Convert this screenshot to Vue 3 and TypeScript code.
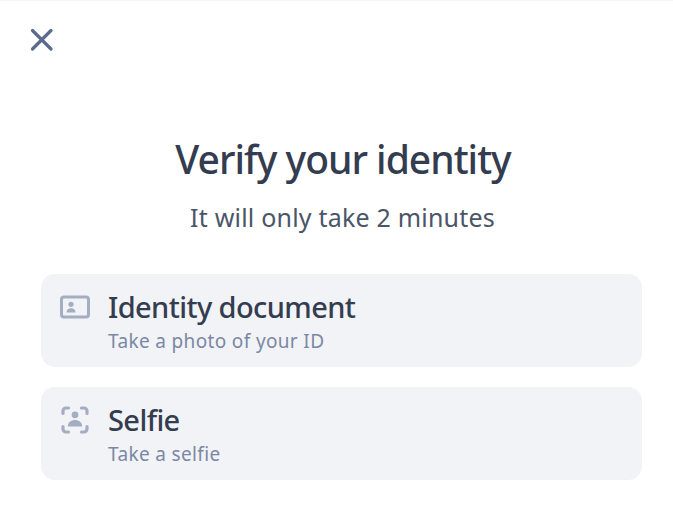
<script setup lang="ts">
interface Step { title: string; sub: string; kind: 'doc' | 'selfie' }
const steps: Step[] = [
  { title: 'Identity document', sub: 'Take a photo of your ID', kind: 'doc' },
  { title: 'Selfie', sub: 'Take a selfie', kind: 'selfie' },
]
</script>

<template>
  <div class="page">
    <button class="close" aria-label="Close">
      <svg width="26" height="26" viewBox="0 0 26 26" fill="none">
        <path d="M3.500 3.500L22 22M22 3.500L3.500 22" stroke="#5b6b8c" stroke-width="3.200" stroke-linecap="round" />
      </svg>
    </button>
    <h1 class="title">Verify your identity</h1>
    <p class="lead">It will only take 2 minutes</p>
    <div class="list">
      <div v-for="s in steps" :key="s.title" class="card">
        <div class="icon">
          <svg v-if="s.kind === 'doc'" width="30" height="24" viewBox="0 0 30 24" fill="none">
            <rect x="1.500" y="2" width="27" height="20" rx="2.500" stroke="#a4aec2" stroke-width="3" />
            <circle cx="11" cy="9.300" r="2.600" fill="#a4aec2" />
            <path d="M6.500 17.500c0-2.800 2-4.200 4.500-4.200s4.500 1.400 4.500 4.200z" fill="#a4aec2" />
          </svg>
          <svg v-else width="30" height="30" viewBox="0 0 30 30" fill="none">
            <path d="M3 8.500V6a3 3 0 0 1 3-3h2.500M21.500 3H24a3 3 0 0 1 3 3v2.500M27 21.500V24a3 3 0 0 1-3 3h-2.500M8.500 27H6a3 3 0 0 1-3-3v-2.500" stroke="#a4aec2" stroke-width="3.200" stroke-linecap="round" />
            <circle cx="15" cy="9.800" r="3.400" fill="#a4aec2" />
            <path d="M7.800 21.500c0-4.200 3.200-6.500 7.200-6.500s7.200 2.300 7.200 6.500z" fill="#a4aec2" />
          </svg>
        </div>
        <div class="text">
          <div class="name">{{ s.title }}</div>
          <div class="sub">{{ s.sub }}</div>
        </div>
      </div>
    </div>
  </div>
</template>

<style>
html, body { margin: 0; background: #fff; }
</style>

<style scoped>
.page {
  width: 673px;
  height: 515px;
  box-sizing: border-box;
  padding: 26px 31px 0 41px;
  border-top: 1px solid #f6f6f7;
  font-family: "Noto Sans", sans-serif;
  background: #fff;
  overflow: hidden;
}
.close {
  display: block;
  padding: 0;
  border: 0;
  background: none;
  height: 26px;
  width: 26px;
  margin-left: -12px;
}
.title {
  margin: 80px 0 0 3px;
  font-size: 39px;
  line-height: 52px;
  font-weight: 500;
  letter-spacing: -1px;
  color: #333d4f;
  text-align: center;
}
.lead {
  margin: 16px 0 0 2px;
  font-size: 25px;
  line-height: 32px;
  letter-spacing: 0.2px;
  color: #4a5568;
  text-align: center;
}
.list {
  display: flex;
  flex-direction: column;
  gap: 20px;
  margin-top: 41px;
}
.card {
  display: flex;
  gap: 18px;
  height: 93px;
  box-sizing: border-box;
  padding: 15px 19px;
  border-radius: 14px;
  background: #f2f3f7;
}
.icon {
  width: 30px;
  height: 36px;
  display: flex;
  align-items: center;
}
.name {
  font-size: 29px;
  line-height: 36px;
  font-weight: 500;
  letter-spacing: -0.6px;
  color: #333d4f;
}
.sub {
  margin-top: 3px;
  font-size: 19px;
  line-height: 26px;
  color: #7b88a3;
  letter-spacing: 0.35px;
}
</style>
